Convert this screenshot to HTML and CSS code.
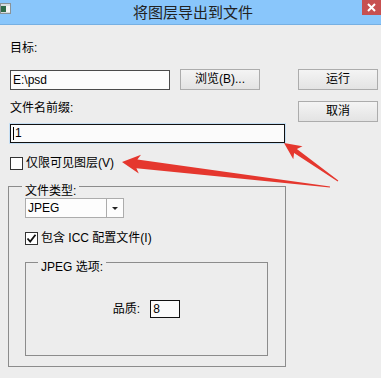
FILE: index.html
```html
<!DOCTYPE html>
<html lang="zh-CN">
<head>
  <meta charset="UTF-8" />
  <meta name="viewport" content="width=device-width, initial-scale=1" />
  <title>将图层导出到文件</title>
  <link rel="stylesheet" href="styles.css">
</head>
<body>

<div class="window">
  <div class="titlebar">
    <svg class="app-icon" width="11" height="11" viewBox="0 0 11 11">
      <rect x="0.5" y="0.5" width="10" height="10" fill="#d8dde0" stroke="#8a9398"/>
      <rect x="1" y="3" width="5" height="6" fill="#2f6b4a"/>
      <rect x="6" y="3" width="4" height="6" fill="#f4f4f4"/>
    </svg>
    <div class="title">将图层导出到文件</div>
    <div class="close">
      <svg width="19" height="15" viewBox="0 0 19 15">
        <path d="M6 4 L13 11 M13 4 L6 11" stroke="#fff" stroke-width="2"/>
      </svg>
    </div>
  </div>

  <div class="content">
    <div class="left">
      <div class="label first">目标:</div>
      <div class="row">
        <div class="field path">E:\psd</div>
        <button type="button" class="btn browse">浏览(B)...</button>
      </div>

      <div class="label second">文件名前缀:</div>
      <div class="field prefix"><span class="caret"></span>1</div>

      <div class="check visible">
        <span class="box"></span>仅限可见图层(V)
      </div>

      <div class="group outer">
        <div class="legend">文件类型:</div>
        <div class="select">
          <span class="value">JPEG</span>
          <span class="drop"></span>
        </div>
        <div class="check icc">
          <span class="box">
            <svg width="11" height="11" viewBox="0 0 11 11">
              <path d="M1.5 5.5 L4.2 8.5 L9.5 1.8" fill="none" stroke="#111" stroke-width="1.8"/>
            </svg>
          </span>包含 ICC 配置文件(I)
        </div>

        <div class="group inner">
          <div class="legend">JPEG 选项:</div>
          <div class="quality">
            <span>品质:</span>
            <div class="field small">8</div>
          </div>
        </div>
      </div>
    </div>

    <div class="right">
      <button type="button" class="btn">运行</button>
      <button type="button" class="btn">取消</button>
    </div>
  </div>

  <!-- 标注箭头 -->
  <svg class="arrows" width="381" height="378" viewBox="0 0 381 378">
    <polygon points="284,143 302.5,146.3 296.9,149.1 338.3,180.6 337.7,181.4 294.1,153.1 293.3,159.3" fill="#e5372e"/>
    <polygon points="122,162 141,154.8 137.4,159.4 330.1,186.4 329.9,187.6 136.4,168.2 138.8,173.4" fill="#e5372e"/>
  </svg>
</div>

</body>
</html>
```

FILE: styles.css
```css
body {
  margin: 0;
  background: #ededed;
  font-family: 'Liberation Sans', 'Noto Sans CJK SC', sans-serif;
  font-size: 12px;
  line-height: 16px;
  color: #000;
}
.window {
  position: relative;
  width: 381px;
  height: 378px;
  overflow: hidden;
}

/* 标题栏 */
.titlebar {
  height: 24px;
  background: #89c6fb;
  border-bottom: 1px solid #76b0e3;
  display: flex;
  align-items: flex-start;
}
.app-icon {
  margin-top: 3px;
  flex: 0 0 auto;
}
.title {
  flex: 1;
  text-align: center;
  font-family: 'Noto Sans CJK SC', sans-serif;
  font-size: 15px;
  line-height: 24px;
  color: #222;
  padding-left: 13px;
}
.close {
  width: 19px;
  height: 15px;
  background: #c75050;
  display: flex;
}

/* 内容 */
.content {
  display: flex;
  gap: 12px;
  padding: 15px 0 0 8px;
}
.left {
  width: 278px;
}
.label {
  padding-left: 2px;
}
.label.second {
  margin-top: 10px;
}
.row {
  display: flex;
  align-items: flex-end;
  gap: 10px;
  margin-top: 13px;
  padding-left: 2px;
}
.field {
  box-sizing: border-box;
  height: 20px;
  border: 1px solid #4a4a4a;
  background: #fbfbfb;
  padding-left: 2px;
  line-height: 18px;
  white-space: nowrap;
}
.path {
  width: 160px;
}
.prefix {
  width: 275px;
  height: 19px;
  line-height: 17px;
  margin: 8px 0 0 2px;
  border-color: #111;
  box-shadow: 0 0 0 1px #c6dff4;
  display: flex;
  align-items: center;
}
.caret {
  width: 1px;
  height: 13px;
  background: #000;
  margin-right: 1px;
}
.btn {
  box-sizing: border-box;
  width: 80px;
  height: 21px;
  padding: 0;
  border: 1px solid #acacac;
  background: linear-gradient(#f4f4f4, #e3e3e3);
  font: inherit;
  line-height: 19px;
  color: #000;
}

/* 复选框 */
.check {
  display: flex;
  align-items: center;
  gap: 3px;
  height: 16px;
}
.check.visible {
  margin: 12px 0 0 2px;
}
.check.icc {
  margin: 12px 0 0 16px;
}
.box {
  box-sizing: border-box;
  width: 13px;
  height: 13px;
  border: 1px solid #333;
  background: #fff;
  display: flex;
  align-items: center;
  justify-content: center;
}

/* 分组框 */
.group {
  box-sizing: border-box;
  border: 1px solid #8c8c8c;
}
.group.outer {
  margin-top: 15px;
  padding-bottom: 10px;
}
.group.inner {
  width: 243px;
  height: 94px;
  margin: 16px 0 0 16px;
}
.legend {
  width: fit-content;
  margin: -3px 0 0 13px;
  padding: 0 3px;
  background: #ededed;
  line-height: 14px;
}
.inner .legend {
  margin-left: 12px;
}
.select {
  box-sizing: border-box;
  width: 99px;
  height: 20px;
  margin-left: 16px;
  border: 1px solid #acacac;
  background: #fdfdfd;
  display: flex;
}
.select .value {
  flex: 1;
  padding-left: 2px;
  line-height: 18px;
}
.select .drop {
  width: 16px;
  border-left: 1px solid #acacac;
  display: flex;
  align-items: center;
  justify-content: center;
}
.select .drop::after {
  content: '';
  border-left: 3px solid transparent;
  border-right: 3px solid transparent;
  border-top: 3px solid #222;
}
.quality {
  display: flex;
  justify-content: center;
  align-items: center;
  gap: 10px;
  margin-top: 26px;
}
.field.small {
  width: 30px;
  height: 18px;
  line-height: 16px;
  border-color: #111;
}

.right {
  display: flex;
  flex-direction: column;
  gap: 11px;
  padding-top: 29px;
}

/* 标注 */
.arrows {
  position: absolute;
  left: 0;
  top: 0;
  pointer-events: none;
}
```
